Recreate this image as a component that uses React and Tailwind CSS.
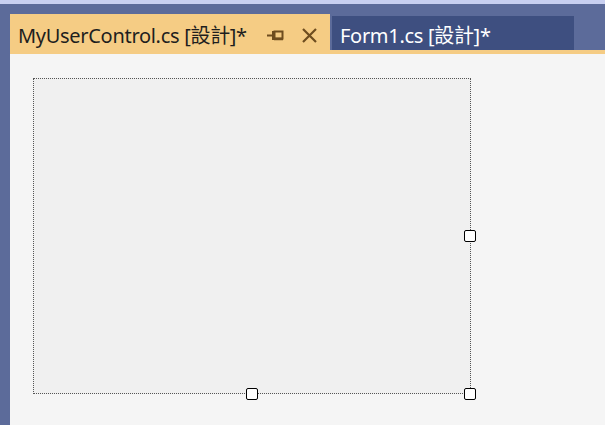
import React from 'react'

function PinIcon() {
  return (
    <svg width="17" height="11" viewBox="0 0 17 11" fill="none">
      <path d="M0 5.5h6" stroke="#6e4d1f" strokeWidth="2" />
      <path d="M6 1v9" stroke="#6e4d1f" strokeWidth="2" />
      <rect x="7.5" y="1.5" width="8" height="7" stroke="#6e4d1f" strokeWidth="2" />
      <path d="M7 9h9" stroke="#6e4d1f" strokeWidth="2.5" />
    </svg>
  )
}

function CloseIcon() {
  return (
    <svg width="15" height="15" viewBox="0 0 15 15" fill="none">
      <path d="M1 1l13 13M14 1L1 14" stroke="#6e4d1f" strokeWidth="2.2" />
    </svg>
  )
}

function Handle({ className }) {
  return (
    <div className={`absolute w-[12px] h-[12px] bg-white border border-black rounded-[2px] ${className}`} />
  )
}

export default function App() {
  const font = { fontFamily: '"Noto Sans", "Noto Sans CJK TC", sans-serif' }
  return (
    <div className="w-[605px] h-[425px] flex flex-col bg-[#5c6b9a] overflow-hidden" style={font}>
      <div className="h-[4px] bg-[#c8cff0]" />

      <div className="flex-1 flex flex-col pl-[10px] pt-[10px]">
        {/* tabs */}
        <div className="flex h-[36px]">
          <div className="w-[320px] h-full bg-[#f5cc84] flex items-center pl-[8px] pt-[7px] text-[#1e1e1e] text-[20px] leading-none">
            <span className="tracking-[-0.3px]">MyUserControl.cs [設計]*</span>
            <div className="ml-auto flex items-center gap-[18px] pr-[13px]">
              <PinIcon />
              <CloseIcon />
            </div>
          </div>
          <div className="ml-[2px] mt-[2px] w-[242px] h-[34px] bg-[#3e4f80] flex items-center pl-[8px] pt-[5px] text-white text-[20px] leading-none">
            <span className="tracking-[-0.3px]">Form1.cs [設計]*</span>
          </div>
        </div>
        <div className="h-[4px] bg-[#f5cc84]" />

        {/* designer surface */}
        <div className="flex-1 bg-[#f5f5f5] pl-[23px] pt-[24px]">
          <div className="relative w-[438px] h-[316px] bg-[#f0f0f0] border border-dotted border-[#555]">
            <Handle className="right-[-6px] top-[151px]" />
            <Handle className="right-[-6px] bottom-[-7px]" />
            <Handle className="left-[212px] bottom-[-7px]" />
          </div>
        </div>
      </div>
    </div>
  )
}
